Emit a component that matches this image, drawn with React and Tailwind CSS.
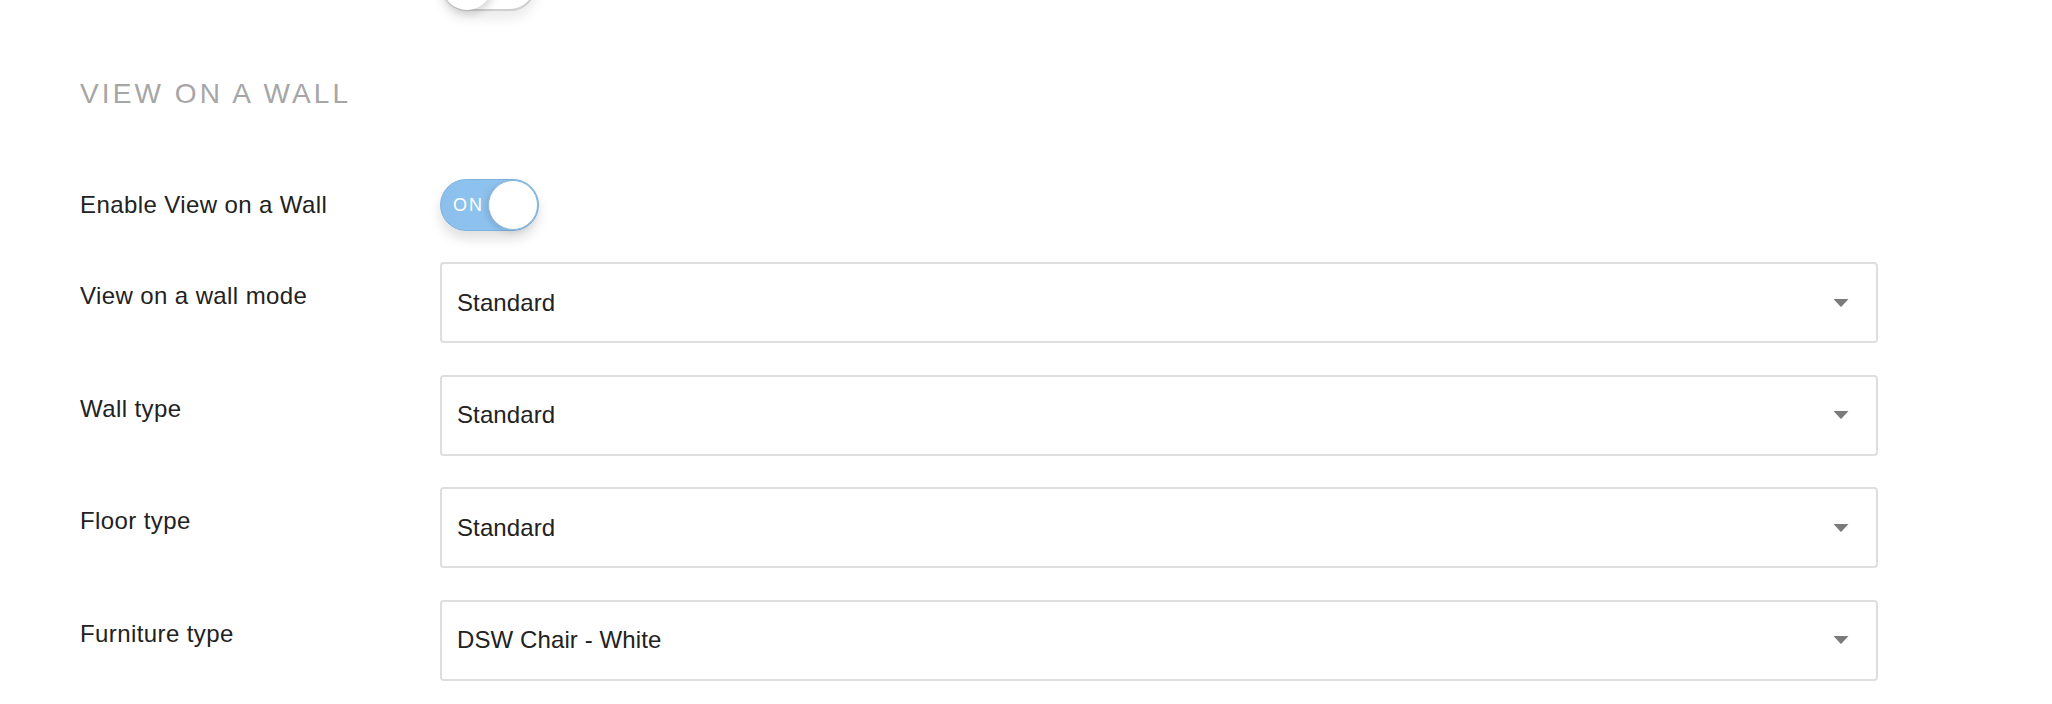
import React from 'react';

const ROWS = [
  { label: 'View on a wall mode', value: 'Standard' },
  { label: 'Wall type', value: 'Standard' },
  { label: 'Floor type', value: 'Standard' },
  { label: 'Furniture type', value: 'DSW Chair - White' },
];

function Toggle({ on }) {
  if (on) {
    return (
      <div className="relative flex h-[52px] w-[99px] items-center rounded-full border border-[#7fb2df] bg-[linear-gradient(90deg,#8cbfec,#8fc6f3)] shadow-[0_8px_12px_rgba(0,0,0,0.12)]">
        <span className="ml-[12px] text-[18px] leading-none tracking-[2px] text-white">ON</span>
        <span className="absolute right-[0px] top-[0px] h-[50px] w-[50px] rounded-full border border-[#8ab7de] bg-white shadow-[-2px_2px_6px_rgba(0,0,0,0.12)]" />
      </div>
    );
  }
  return (
    <div className="relative h-[52px] w-[95px] rounded-full border-2 border-[#cfcfcf] bg-white shadow-[0_8px_12px_rgba(0,0,0,0.08)]">
      <span className="absolute left-[-1px] top-[-1px] h-[50px] w-[50px] rounded-full bg-white shadow-[2px_3px_8px_rgba(0,0,0,0.18)]" />
    </div>
  );
}

function Select({ value }) {
  return (
    <div className="flex h-[81px] w-[1438px] items-center justify-between rounded-[4px] border-2 border-[#dedede] bg-white pl-[15px] pr-[27px]">
      <span className="text-[24px] leading-[24px] tracking-[0.1px] text-[#222]">{value}</span>
      <svg width="16" height="8" viewBox="0 0 16 8">
        <path d="M0.5 0 H15.5 L8.6 7.4 Q8 8 7.4 7.4 Z" fill="#7b7b7b" />
      </svg>
    </div>
  );
}

export default function App() {
  return (
    <div className="flex min-h-screen flex-col overflow-hidden bg-white pl-[80px] font-['Liberation_Sans',Arial,sans-serif]">
      <div className="mt-[-41px] flex items-center">
        <div className="w-[361px]" />
        <Toggle on={false} />
      </div>

      <h3 className="mt-[69px] text-[28px] font-normal leading-[28px] tracking-[3.1px] text-[#a6a6a6]">
        VIEW ON A WALL
      </h3>

      <div className="mt-[71px] flex items-center">
        <div className="w-[360px] text-[24px] leading-[24px] tracking-[0.4px] text-[#222]">Enable View on a Wall</div>
        <Toggle on />
      </div>

      <div className="mt-[31px] flex flex-col gap-[31.5px]">
        {ROWS.map((row) => (
          <div key={row.label} className="flex items-start">
            <div className="w-[360px] pt-[22px] text-[24px] leading-[24px] tracking-[0.4px] text-[#222]">{row.label}</div>
            <Select value={row.value} />
          </div>
        ))}
      </div>
    </div>
  );
}
